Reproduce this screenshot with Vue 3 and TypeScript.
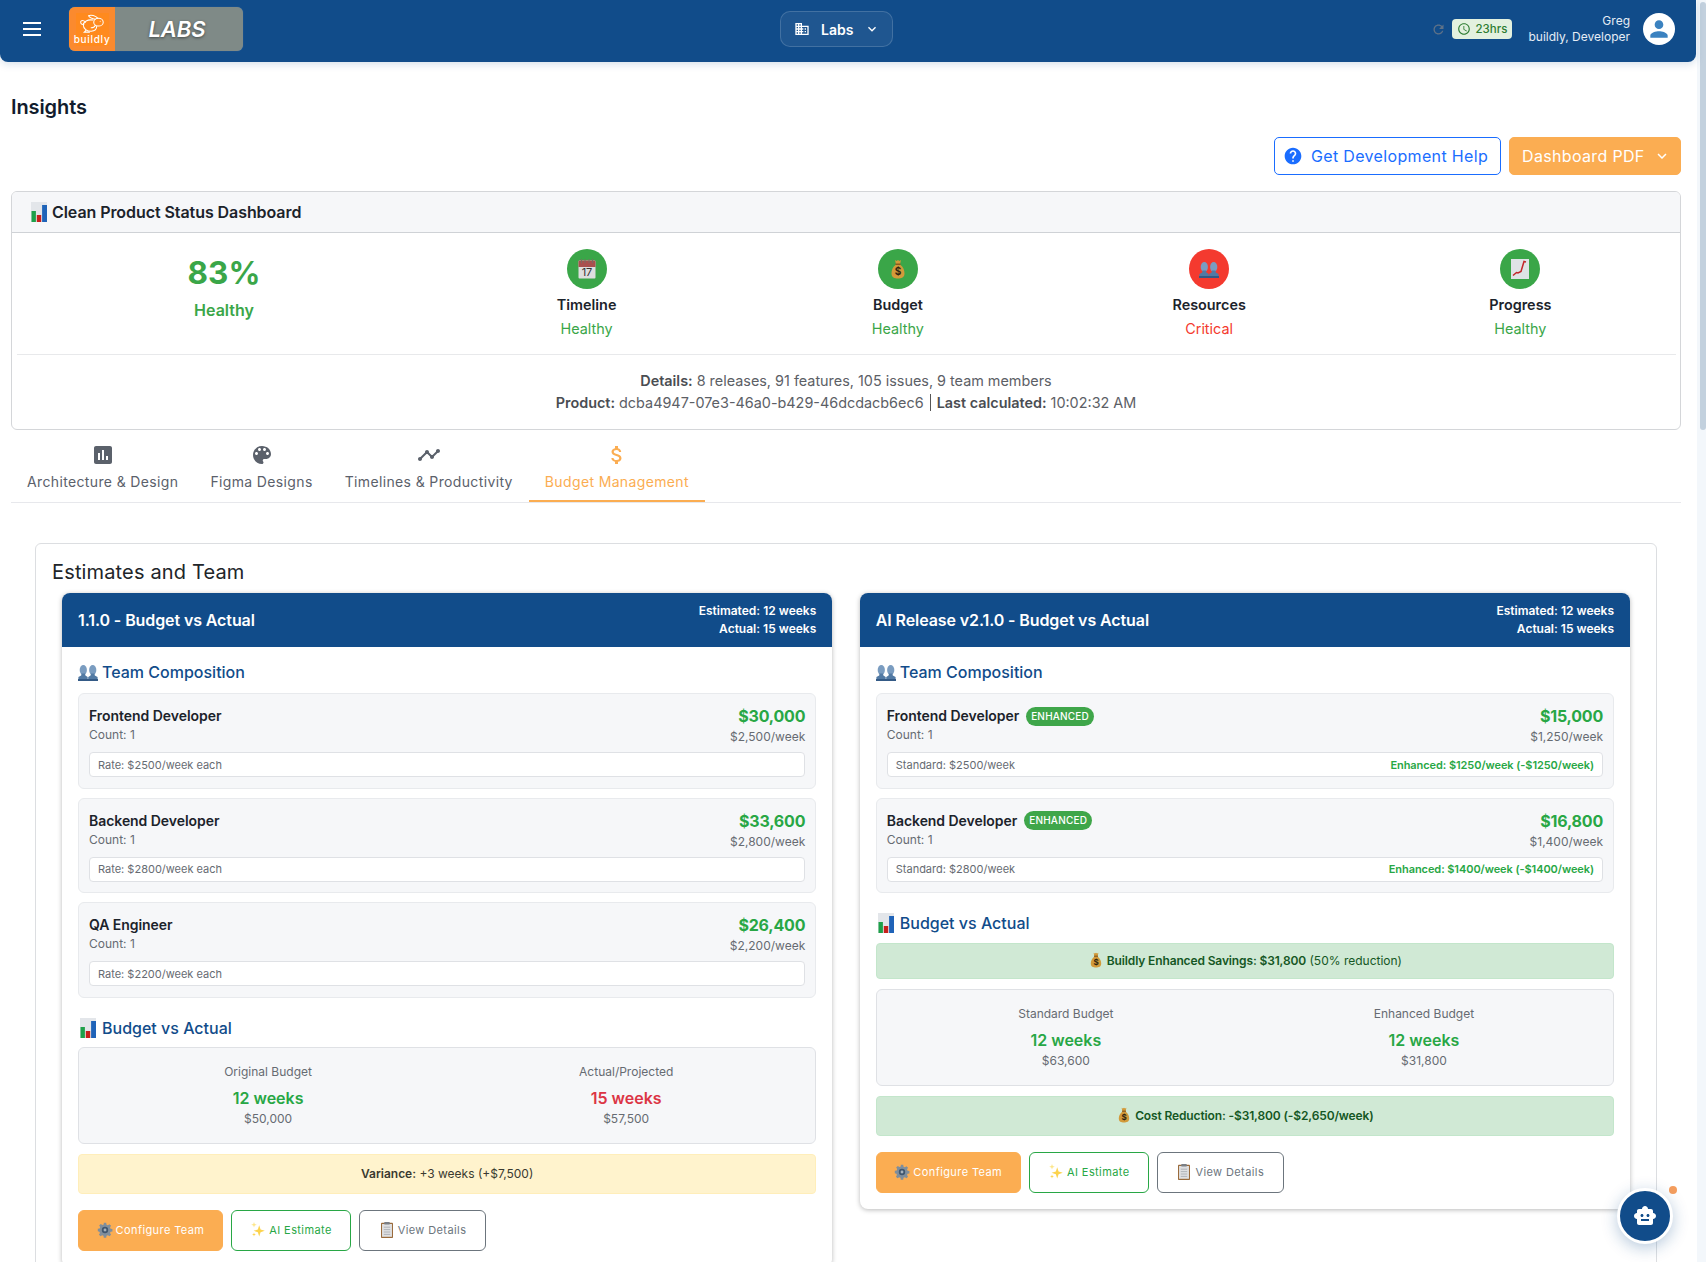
<script setup lang="ts">
import { h } from 'vue'

interface Role { name: string; count: string; amount: string; week: string; rate?: string; std?: string; enh?: string }
interface Status { icon: string; label: string; state: string; bad?: boolean }
const P = {
  assess: 'M19 3H5c-1.1 0-2 .9-2 2v14c0 1.1.9 2 2 2h14c1.1 0 2-.9 2-2V5c0-1.1-.9-2-2-2zM9 17H7v-7h2v7zm4 0h-2V7h2v10zm4 0h-2v-4h2v4z',
  palette: 'M12 3c-4.97 0-9 4.03-9 9s4.03 9 9 9c.83 0 1.5-.67 1.5-1.5 0-.39-.15-.74-.39-1.01-.23-.26-.38-.61-.38-.99 0-.83.67-1.5 1.5-1.5H16c2.76 0 5-2.24 5-5 0-4.42-4.03-8-9-8zm-5.5 9c-.83 0-1.5-.67-1.5-1.5S5.67 9 6.5 9 8 9.67 8 10.5 7.33 12 6.5 12zm3-4C8.67 8 8 7.33 8 6.5S8.67 5 9.5 5s1.5.67 1.5 1.5S10.33 8 9.5 8zm5 0c-.83 0-1.5-.67-1.5-1.5S13.67 5 14.5 5s1.5.67 1.5 1.5S15.33 8 14.5 8zm3 4c-.83 0-1.5-.67-1.5-1.5S16.67 9 17.5 9s1.5.67 1.5 1.5-.67 1.5-1.5 1.5z',
  timeline: 'M23 8c0 1.1-.9 2-2 2-.18 0-.35-.02-.51-.07l-3.56 3.55c.05.16.07.34.07.52 0 1.1-.9 2-2 2s-2-.9-2-2c0-.18.02-.36.07-.52l-2.55-2.55c-.16.05-.34.07-.52.07s-.36-.02-.52-.07l-4.55 4.56c.05.16.07.33.07.51 0 1.1-.9 2-2 2s-2-.9-2-2 .9-2 2-2c.18 0 .35.02.51.07l4.56-4.55C8.02 9.36 8 9.18 8 9c0-1.1.9-2 2-2s2 .9 2 2c0 .18-.02.36-.07.52l2.55 2.55c.16-.05.34-.07.52-.07s.36.02.52.07l3.55-3.56C19.02 8.35 19 8.18 19 8c0-1.1.9-2 2-2s2 .9 2 2z',
  money: 'M11.8 10.9c-2.27-.59-3-1.2-3-2.15 0-1.09 1.01-1.85 2.7-1.85 1.78 0 2.44.85 2.5 2.1h2.21c-.07-1.72-1.12-3.3-3.21-3.81V3h-3v2.16c-1.94.42-3.5 1.68-3.5 3.61 0 2.31 1.91 3.46 4.7 4.13 2.5.6 3 1.48 3 2.41 0 .69-.49 1.79-2.7 1.79-2.06 0-2.87-.92-2.98-2.1h-2.2c.12 2.19 1.76 3.42 3.68 3.83V21h3v-2.15c1.95-.37 3.5-1.5 3.5-3.55 0-2.84-2.43-3.81-4.7-4.4z',
  help: 'M12 2C6.48 2 2 6.48 2 12s4.48 10 10 10 10-4.48 10-10S17.52 2 12 2zm1 17h-2v-2h2v2zm2.07-7.75l-.9.92C13.45 12.9 13 13.5 13 15h-2v-.5c0-1.1.45-2.1 1.17-2.83l1.24-1.26c.37-.36.59-.86.59-1.41 0-1.1-.9-2-2-2s-2 .9-2 2H8c0-2.21 1.79-4 4-4s4 1.79 4 4c0 .88-.36 1.68-.93 2.25z',
  domain: 'M12 7V3H2v18h20V7H12zM6 19H4v-2h2v2zm0-4H4v-2h2v2zm0-4H4V9h2v2zm0-4H4V5h2v2zm4 12H8v-2h2v2zm0-4H8v-2h2v2zm0-4H8V9h2v2zm0-4H8V5h2v2zm10 12h-8v-2h2v-2h-2v-2h2v-2h-2V9h8v10zm-2-8h-2v2h2v-2zm0 4h-2v2h2v-2z',
  refresh: 'M17.65 6.35C16.2 4.9 14.21 4 12 4c-4.42 0-7.99 3.58-7.99 8s3.57 8 7.99 8c3.73 0 6.84-2.55 7.73-6h-2.08c-.82 2.33-3.04 4-5.65 4-3.31 0-6-2.69-6-6s2.69-6 6-6c1.66 0 3.14.69 4.22 1.78L13 11h7V4l-2.35 2.35z',
  clock: 'M11.99 2C6.47 2 2 6.48 2 12s4.47 10 9.99 10C17.52 22 22 17.52 22 12S17.52 2 11.99 2zM12 20c-4.42 0-8-3.58-8-8s3.58-8 8-8 8 3.58 8 8-3.58 8-8 8zm.5-13H11v6l5.25 3.15.75-1.23-4.5-2.67z',
  person: 'M12 12c2.21 0 4-1.79 4-4s-1.79-4-4-4-4 1.79-4 4 1.79 4 4 4zm0 2c-2.67 0-8 1.34-8 4v2h16v-2c0-2.66-5.33-4-8-4z',
  chevron: 'M16.59 8.59L12 13.17 7.41 8.59 6 10l6 6 6-6z',
  robot: 'M20 9V7c0-1.1-.9-2-2-2h-3c0-1.66-1.34-3-3-3S9 3.34 9 5H6c-1.1 0-2 .9-2 2v2c-1.66 0-3 1.34-3 3s1.34 3 3 3v4c0 1.1.9 2 2 2h12c1.1 0 2-.9 2-2v-4c1.66 0 3-1.34 3-3s-1.34-3-3-3zM7.5 11.5C7.5 10.67 8.17 10 9 10s1.5.67 1.5 1.5S9.83 13 9 13s-1.5-.67-1.5-1.5zM16 17H8v-2h8v2zm-1-4c-.83 0-1.5-.67-1.5-1.5S14.17 10 15 10s1.5.67 1.5 1.5S15.83 13 15 13z',
}

const emojiFont = 'Inter, sans-serif'
const BagIcon = () =>
  h('svg', { viewBox: '0 0 20 20' }, [
    h('use', { href: '#e-bag' }),
    h('text', { x: 10, y: 16, 'font-size': 10, 'font-weight': 700, 'text-anchor': 'middle', fill: '#2d2410', 'font-family': emojiFont }, '$'),
  ])
const CalIcon = () =>
  h('svg', { viewBox: '0 0 20 20' }, [
    h('use', { href: '#e-cal' }),
    h('text', { x: 10, y: 17, 'font-size': 11, 'text-anchor': 'middle', fill: '#333', 'font-family': emojiFont }, '17'),
  ])

const tabs = [
  { label: 'Architecture & Design', d: P.assess },
  { label: 'Figma Designs', d: P.palette },
  { label: 'Timelines & Productivity', d: P.timeline },
  { label: 'Budget Management', d: P.money, active: true },
]
const statuses: Status[] = [
  { icon: 'e-cal', label: 'Timeline', state: 'Healthy' },
  { icon: 'e-bag', label: 'Budget', state: 'Healthy' },
  { icon: 'e-users', label: 'Resources', state: 'Critical', bad: true },
  { icon: 'e-up', label: 'Progress', state: 'Healthy' },
]
const leftRoles: Role[] = [
  { name: 'Frontend Developer', count: 'Count: 1', amount: '$30,000', week: '$2,500/week', rate: 'Rate: $2500/week each' },
  { name: 'Backend Developer', count: 'Count: 1', amount: '$33,600', week: '$2,800/week', rate: 'Rate: $2800/week each' },
  { name: 'QA Engineer', count: 'Count: 1', amount: '$26,400', week: '$2,200/week', rate: 'Rate: $2200/week each' },
]
const rightRoles: Role[] = [
  { name: 'Frontend Developer', count: 'Count: 1', amount: '$15,000', week: '$1,250/week', std: 'Standard: $2500/week', enh: 'Enhanced: $1250/week (-$1250/week)' },
  { name: 'Backend Developer', count: 'Count: 1', amount: '$16,800', week: '$1,400/week', std: 'Standard: $2800/week', enh: 'Enhanced: $1400/week (-$1400/week)' },
]
const cards = [
  {
    title: '1.1.0 - Budget vs Actual', roles: leftRoles, enhanced: false,
    cols: [
      { label: 'Original Budget', value: '12 weeks', sub: '$50,000', bad: false },
      { label: 'Actual/Projected', value: '15 weeks', sub: '$57,500', bad: true },
    ],
  },
  {
    title: 'AI Release v2.1.0 - Budget vs Actual', roles: rightRoles, enhanced: true,
    cols: [
      { label: 'Standard Budget', value: '12 weeks', sub: '$63,600', bad: false },
      { label: 'Enhanced Budget', value: '12 weeks', sub: '$31,800', bad: false },
    ],
  },
]
</script>

<template>
  <div class="page">
    <svg class="sprite" aria-hidden="true">
      <symbol id="e-chart" viewBox="0 0 20 20">
        <rect x="2" y="0" width="16" height="20" fill="#e3e6ea" />
        <rect x="2.500" y="9" width="4.400" height="11" fill="#1ea04a" />
        <rect x="7.800" y="13" width="4.400" height="7" fill="#c8201c" />
        <rect x="13.100" y="3" width="4.900" height="17" fill="#1f63b8" />
      </symbol>
      <symbol id="e-users" viewBox="0 0 20 20">
        <ellipse cx="5.300" cy="8" rx="3.600" ry="5" fill="#7a9cc0" />
        <ellipse cx="14.700" cy="8" rx="3.600" ry="5" fill="#7a9cc0" />
        <path d="M3.500 11.500h3.600l.3 2 2.300 1.500V18H.4v-3l2.800-1.500z" fill="#527aa4" />
        <path d="M12.900 11.500h3.600l.3 2 2.800 1.500V18h-9.400v-3l2.400-1.500z" fill="#527aa4" />
        <rect x="0" y="17" width="20" height="2" fill="#345a86" />
      </symbol>
      <symbol id="e-cal" viewBox="0 0 20 20">
        <rect x="1.500" y="1.500" width="17" height="18" rx="1" fill="#dedede" />
        <path d="M1.500 2.500a1 1 0 0 1 1-1h15a1 1 0 0 1 1 1V8h-17z" fill="#a9504e" />
        <path d="M4.500 0v4M8 0v4M12 0v4M15.500 0v4" stroke="#7b6a62" stroke-width="1" />
      </symbol>
      <symbol id="e-bag" viewBox="0 0 20 20">
        <path d="M7 1l1.500 1L10 1l1.500 1L13 1l-1 4.500c3.500 2.500 4.500 6 4.500 9 0 4-3 5-6.500 5s-6.500-1-6.500-5c0-3 1-6.500 4.500-9z" fill="#d29a3a" />
        <rect x="7.500" y="4.500" width="5" height="1.500" fill="#8a5a1e" />
      </symbol>
      <symbol id="e-up" viewBox="0 0 20 20">
        <rect x="1" y="0" width="18" height="20" fill="#dfe3e6" />
        <path d="M3 16.500l3.500-3 1.500.5 3-1.500 3-10 2 .5" fill="none" stroke="#c3262a" stroke-width="1.500" />
      </symbol>
      <symbol id="e-gear" viewBox="0 0 20 20">
        <path d="M8.500 1h3l.4 2.300 1.700.7 1.900-1.300 2.100 2.100-1.300 1.900.7 1.700 2.300.4v3l-2.300.4-.7 1.700 1.300 1.900-2.100 2.100-1.900-1.300-1.700.7-.4 2.300h-3l-.4-2.300-1.700-.7-1.900 1.300-2.100-2.100 1.300-1.900-.7-1.700L1 11.500v-3l2.300-.4.7-1.700-1.300-1.900 2.100-2.100 1.900 1.300 1.700-.7z" fill="#7f8e9c" />
        <circle cx="10" cy="10" r="4" fill="#3f566f" />
        <circle cx="10" cy="10" r="1.800" fill="#a6b2bd" />
      </symbol>
      <symbol id="e-spark" viewBox="0 0 20 20">
        <path d="M11.500 4l1.700 5.300L18.500 11l-5.300 1.700L11.500 18l-1.700-5.300L4.500 11l5.300-1.700z" fill="#fcd34d" />
        <path d="M5 0l.9 2.600 2.600.9-2.600.9L5 7l-.9-2.600-2.600-.9 2.600-.9z" fill="#fde68a" />
        <path d="M5 13l.6 1.900 1.900.6-1.900.6L5 18l-.6-1.900-1.900-.6 1.900-.6z" fill="#fcd34d" />
      </symbol>
      <symbol id="e-clip" viewBox="0 0 20 20">
        <rect x="2.500" y="1" width="15" height="19" rx="1" fill="#9a6b3c" />
        <rect x="3.800" y="2.500" width="12.400" height="16" fill="#dfe0e2" />
        <path d="M6 6.500h8M6 9.500h8M6 12.500h8M6 15.500h8" stroke="#a3a8ad" stroke-width="1" />
        <rect x="6.500" y="0" width="7" height="3" rx=".6" fill="#7a7f86" />
      </symbol>
    </svg>

    <header class="topbar">
      <div class="top-left">
        <button class="menu" aria-label="menu"><span></span><span></span><span></span></button>
        <div class="logo">
          <div class="logo-mark">
            <div class="logo-inner">
              <svg viewBox="0 0 32 22" width="28" height="19" fill="none" stroke="#fff" stroke-width="1.200" stroke-linecap="round">
                <path d="M17 7C11 6 6 9 6 13c0 4 4 7 9 7 4 0 6.500-2 6.500-6" />
                <ellipse cx="23.500" cy="9.500" rx="5.500" ry="4.500" />
                <path d="M20 6C17 5.500 13 4 12 2c3-1.500 8 0 11 3" />
                <path d="M6.500 12C4 12.500 2.500 11 3 8.500c1.500-1.500 4-.5 5.500 1M9 19l-2 2h6M15 16c2 0 4-1 5-3" />
                <circle cx="25.500" cy="8.500" r=".6" fill="#fff" stroke="none" />
              </svg>
              <span class="logo-word">buildly</span>
            </div>
          </div>
          <div class="logo-labs">LABS</div>
        </div>
      </div>
      <div class="org">
        <svg class="org-ic" viewBox="0 0 24 24"><path :d="P.domain" /></svg>
        <span>Labs</span>
        <svg class="org-chev" viewBox="0 0 24 24"><path :d="P.chevron" /></svg>
      </div>
      <div class="top-right">
        <svg class="refresh" viewBox="0 0 24 24"><path :d="P.refresh" /></svg>
        <div class="hours">
          <svg viewBox="0 0 24 24"><path :d="P.clock" /></svg>
          <span>23hrs</span>
        </div>
        <div class="who"><div>Greg</div><div>buildly, Developer</div></div>
        <div class="avatar"><svg viewBox="0 0 24 24"><path :d="P.person" /></svg></div>
      </div>
    </header>

    <main class="main">
      <h1 class="title">Insights</h1>
      <div class="actions">
        <button class="btn-help">
          <svg viewBox="0 0 24 24"><path :d="P.help" /></svg>
          Get Development Help
        </button>
        <button class="btn-pdf">
          Dashboard PDF
          <svg viewBox="0 0 24 24"><path :d="P.chevron" /></svg>
        </button>
      </div>

      <section class="status-card">
        <div class="status-head">
          <svg class="em em-20"><use href="#e-chart" /></svg>
          <span>Clean Product Status Dashboard</span>
        </div>
        <div class="status-row">
          <div class="score">
            <div class="pct">83%</div>
            <div class="pct-state">Healthy</div>
          </div>
          <div class="status-items">
            <div v-for="s in statuses" :key="s.label" class="s-item">
              <div class="s-dot" :class="{ bad: s.bad }">
                <CalIcon v-if="s.icon === 'e-cal'" class="em em-20" />
                <BagIcon v-else-if="s.icon === 'e-bag'" class="em em-20" />
                <svg v-else class="em em-20"><use :href="'#' + s.icon" /></svg>
              </div>
              <div class="s-label">{{ s.label }}</div>
              <div class="s-state" :class="{ bad: s.bad }">{{ s.state }}</div>
            </div>
          </div>
        </div>
        <div class="status-foot">
          <div><b>Details:</b> 8 releases, 91 features, 105 issues, 9 team members</div>
          <div><b>Product:</b> dcba4947-07e3-46a0-b429-46dcdacb6ec6 <span class="pipe"></span> <b>Last calculated:</b> 10:02:32 AM</div>
        </div>
      </section>

      <nav class="tabs">
        <div v-for="t in tabs" :key="t.label" class="tab" :class="{ active: t.active }">
          <svg viewBox="0 0 24 24"><path :d="t.d" /></svg>
          <span>{{ t.label }}</span>
        </div>
      </nav>

      <section class="estimates">
        <h2 class="est-title">Estimates and Team</h2>
        <div class="est-grid">
          <article v-for="c in cards" :key="c.title" class="rel-card">
            <div class="rel-head">
              <div class="rel-title">{{ c.title }}</div>
              <div class="rel-meta"><div>Estimated: 12 weeks</div><div>Actual: 15 weeks</div></div>
            </div>
            <div class="rel-body">
              <h3 class="sub-title"><svg class="em em-20"><use href="#e-users" /></svg>Team Composition</h3>
              <div class="roles">
                <div v-for="r in c.roles" :key="r.name" class="role">
                  <div class="role-top">
                    <div>
                      <div class="role-name">{{ r.name }}<span v-if="r.enh" class="pill">ENHANCED</span></div>
                      <div class="role-count">{{ r.count }}</div>
                    </div>
                    <div class="role-money">
                      <div class="amount">{{ r.amount }}</div>
                      <div class="per">{{ r.week }}</div>
                    </div>
                  </div>
                  <div class="rate">
                    <span>{{ r.rate || r.std }}</span>
                    <span v-if="r.enh" class="enh">{{ r.enh }}</span>
                  </div>
                </div>
              </div>
              <h3 class="sub-title budget"><svg class="em em-20"><use href="#e-chart" /></svg>Budget vs Actual</h3>
              <div v-if="c.enhanced" class="banner savings">
                <BagIcon class="em em-16" />
                <b>Buildly Enhanced Savings: $31,800</b>&nbsp;(50% reduction)
              </div>
              <div class="compare">
                <div v-for="col in c.cols" :key="col.label" class="cmp-col">
                  <div class="cmp-label">{{ col.label }}</div>
                  <div class="cmp-value" :class="{ bad: col.bad }">{{ col.value }}</div>
                  <div class="cmp-sub">{{ col.sub }}</div>
                </div>
              </div>
              <div v-if="c.enhanced" class="banner reduction">
                <BagIcon class="em em-16" />
                <b>Cost Reduction: -$31,800 (-$2,650/week)</b>
              </div>
              <div v-else class="banner variance"><b>Variance:</b>&nbsp;+3 weeks (+$7,500)</div>
              <div class="btns">
                <button class="b b-orange"><svg class="em em-16"><use href="#e-gear" /></svg>Configure Team</button>
                <button class="b b-green"><svg class="em em-16"><use href="#e-spark" /></svg>AI Estimate</button>
                <button class="b b-gray"><svg class="em em-16"><use href="#e-clip" /></svg>View Details</button>
              </div>
            </div>
          </article>
        </div>
      </section>
    </main>

    <div class="scroll-track"><div class="scroll-thumb"></div></div>
    <div class="dot"></div>
    <button class="fab" aria-label="assistant"><svg viewBox="0 0 24 24"><path :d="P.robot" /></svg></button>
  </div>
</template>

<style>
html, body { margin: 0; height: 1262px; overflow: hidden; background: #fff; }
</style>

<style scoped>
.page { position: relative; width: 1706px; height: 1262px; overflow: hidden; font-family: Inter, "Liberation Sans", sans-serif; color: #212529; background: #fff; }
.sprite { position: absolute; width: 0; height: 0; }
button { font-family: inherit; cursor: pointer; }
svg { display: block; flex: none; }
.em { display: inline-block; }
.em-16 { width: 16px; height: 16px; }
.em-20 { width: 20px; height: 20px; }

.topbar { width: 1696px; height: 62px; box-sizing: border-box; margin-bottom: -1px; background: #114c8a; border-radius: 0 0 8px 8px; box-shadow: 0 2px 8px rgba(17, 76, 138, .18); display: grid; grid-template-columns: 757px 113px 1fr; align-items: center; padding: 0 21px 4px 23px; position: relative; z-index: 2; }
.top-left { display: flex; align-items: center; gap: 28px; }
.menu { width: 18px; height: 14px; padding: 0; border: 0; background: none; display: flex; flex-direction: column; justify-content: space-between; }
.menu span { display: block; height: 2px; background: #fff; }
.logo { width: 174px; height: 44px; display: flex; background: #7f8a87; border-radius: 6px; overflow: hidden; box-shadow: 0 0 1px rgba(255,255,255,.3); }
.logo-mark { width: 46px; background: #fb8a2e; display: flex; align-items: center; justify-content: center; color: #fff; }
.logo-inner { width: 33px; height: 33px; background: #ff8a1e; display: flex; flex-direction: column; align-items: center; justify-content: center; }
.logo-word { font-size: 10px; line-height: 11px; letter-spacing: .7px; font-weight: 500; margin-top: 1px; }
.logo-labs { flex: 1; display: flex; align-items: center; justify-content: center; color: #fff; font-size: 22px; font-weight: 600; font-style: italic; text-shadow: 0 1px 3px rgba(0, 0, 0, .5); padding-right: 4px; }
.org { width: 113px; height: 36px; box-sizing: border-box; display: flex; align-items: center; padding-left: 13px; color: #fff; font-size: 14px; font-weight: 600; background: rgba(255,255,255,.06); border: 1px solid rgba(255,255,255,.16); border-radius: 10px; }
.org-ic { width: 16px; height: 16px; fill: #fff; margin-right: 11px; }
.org-chev { width: 16px; height: 16px; fill: #fff; margin-left: 11px; }
.top-right { display: flex; align-items: center; justify-content: flex-end; }
.refresh { width: 15px; height: 15px; fill: #5f7288; margin-right: 6px; }
.hours { width: 60px; height: 20px; box-sizing: border-box; display: flex; align-items: center; gap: 4px; padding-left: 5px; border-radius: 4px; background: #e3f1df; color: #2e7d32; font-size: 11.500px; font-weight: 500; }
.hours svg { width: 14px; height: 14px; fill: #2e7d32; }
.who { margin-left: 16px; text-align: right; color: #e6edf5; font-size: 12px; line-height: 16px; }
.avatar { width: 32px; height: 32px; margin-left: 13px; border-radius: 50%; background: #fff; display: flex; align-items: center; justify-content: center; }
.avatar svg { width: 26px; height: 26px; fill: #3b82c0; }

.main { width: 1697px; box-sizing: border-box; padding: 0 16px 0 11px; }
.title { margin: 0; padding-top: 32px; font-size: 20px; line-height: 28px; font-weight: 600; letter-spacing: -.1px; color: #111c2d; }
.actions { display: flex; justify-content: flex-end; gap: 8px; margin-top: 16px; }
.btn-help, .btn-pdf { height: 38px; box-sizing: border-box; display: flex; align-items: center; font-size: 16px; letter-spacing: .34px; border-radius: 5px; padding: 0; }
.btn-help { width: 227px; justify-content: flex-start; gap: 8px; padding-left: 8px; background: #fff; border: 1px solid #1a6dff; color: #1a6dff; }
.btn-help svg { width: 20px; height: 20px; fill: #1a6dff; }
.btn-pdf { width: 172px; justify-content: flex-start; gap: 8px; padding-left: 12px; background: #fbad52; border: 1px solid #fbad52; color: #fff; }
.btn-pdf svg { width: 18px; height: 18px; fill: #fff; }

.status-card { margin-top: 16px; height: 239px; box-sizing: border-box; border: 1px solid #d4d6d9; border-radius: 6px; overflow: hidden; }
.status-head { height: 41px; box-sizing: border-box; background: #f6f7f9; border-bottom: 1px solid #cfd2d6; display: flex; align-items: center; gap: 3px; padding-left: 17px; font-size: 16px; letter-spacing: -.07px; font-weight: 600; color: #1c232b; }
.status-row { margin: 0 4px 0 5px; display: grid; grid-template-columns: 414px 1fr; padding: 16px 0 15px; border-bottom: 1px solid #e8e9eb; }
.score { text-align: center; padding-top: 5px; }
.pct { font-size: 31.500px; line-height: 38px; font-weight: 700; color: #3aa648; }
.pct-state { margin-top: 8px; font-size: 16px; line-height: 20px; font-weight: 600; color: #3aa648; }
.status-items { display: grid; grid-template-columns: repeat(4, 1fr); }
.s-item { text-align: center; }
.s-dot { width: 40px; height: 40px; margin: 0 auto; border-radius: 50%; background: #3aa648; display: flex; align-items: center; justify-content: center; }
.s-dot.bad { background: #f43a2f; }
.s-label { margin-top: 6px; font-size: 14.400px; line-height: 20px; font-weight: 600; color: #1c232b; }
.s-state { margin-top: 4px; font-size: 14.400px; line-height: 20px; color: #3aa648; }
.s-state.bad { color: #f43a2f; }
.status-foot { padding-top: 15px; text-align: center; font-size: 14.400px; line-height: 22px; color: #5c6066; }
.status-foot b { font-weight: 600; color: #4a4d52; }
.pipe { display: inline-block; width: 1px; height: 17px; background: #555; margin: 0 2px; vertical-align: -3px; }

.tabs { height: 73px; box-sizing: border-box; display: flex; border-bottom: 1px solid #e7e8ec; }
.tab { height: 72px; box-sizing: border-box; padding: 13px 16px 0; display: flex; flex-direction: column; align-items: center; font-size: 14px; line-height: 20px; letter-spacing: .36px; color: #5b616b; border-bottom: 2px solid transparent; }
.tab svg { width: 24px; height: 24px; fill: currentColor; margin-bottom: 5px; }
.tab.active { color: #fbad52; border-bottom-color: #fbad52; }

.estimates { margin: 40px 24px 0 24px; border: 1px solid #dcdee1; border-radius: 6px; }
.est-title { margin: 0; padding: 14px 16px 0; font-size: 20px; line-height: 28px; font-weight: 400; letter-spacing: .15px; color: #212529; }
.est-grid { margin-top: 7px; padding: 0 26px; display: grid; grid-template-columns: 1fr 1fr; gap: 27.500px; align-items: start; }
.rel-card { border-radius: 8px; background: #fff; box-shadow: 0 1px 5px rgba(0,0,0,.28); overflow: hidden; }
.rel-head { height: 54px; box-sizing: border-box; background: #114c8a; color: #fff; display: flex; align-items: center; justify-content: space-between; padding: 0 16px; }
.rel-title { font-size: 16px; font-weight: 600; letter-spacing: -.1px; }
.rel-meta { text-align: right; font-size: 12px; line-height: 18px; font-weight: 600; }
.rel-body { padding: 13px 16px 16px; }
.sub-title { margin: 0; display: flex; align-items: center; gap: 4px; font-size: 16px; line-height: 24px; font-weight: 500; color: #114c8a; }
.roles { margin-top: 9px; display: flex; flex-direction: column; gap: 9px; }
.sub-title.budget { margin: 18px 0 7.500px; }
.role { box-sizing: border-box; height: 95.500px; padding: 12px 10px 0; background: #f6f7f9; border: 1px solid #e8eaed; border-radius: 6px; }
.role-top { display: flex; justify-content: space-between; height: 40px; }
.role-name { display: flex; align-items: center; gap: 7px; font-size: 14px; line-height: 20px; font-weight: 600; letter-spacing: -.05px; color: #1c232b; }
.pill { height: 19px; line-height: 19px; padding: 0 5px; border-radius: 10px; background: #3fa64a; color: #fff; font-size: 10px; font-weight: 500; letter-spacing: .2px; }
.role-count { font-size: 12px; line-height: 17px; color: #666b72; }
.role-money { text-align: right; margin-top: -1px; }
.amount { font-size: 16px; line-height: 22px; font-weight: 700; letter-spacing: -.2px; color: #28a745; }
.per { margin-top: 1px; font-size: 12px; line-height: 18px; color: #666b72; }
.rate { margin-top: 6px; height: 25.400px; box-sizing: border-box; display: flex; align-items: center; justify-content: space-between; padding: 0 8px; background: #fff; border: 1px solid #dfe1e5; border-radius: 4px; font-size: 11px; color: #666b72; }
.enh { color: #28a745; font-weight: 600; letter-spacing: -.07px; }
.banner { box-sizing: border-box; height: 40px; display: flex; align-items: center; justify-content: center; border-radius: 4px; font-size: 12px; border: 1px solid transparent; }
.banner .em { margin-right: 3px; }
.banner b { font-weight: 600; }
.variance { margin-top: 10.500px; padding-bottom: 2px; background: #fff3cd; border-color: #ffeeba; color: #3a3a30; }
.savings { height: 36px; margin-bottom: 10.500px; padding-bottom: 1px; background: #d0e9d5; border-color: #c3e6cb; color: #155724; }
.savings b, .reduction b { letter-spacing: -.13px; }
.reduction { margin-top: 10.500px; padding-bottom: 2px; background: #d0e9d5; border-color: #c3e6cb; color: #155724; }
.compare { height: 96.500px; box-sizing: border-box; display: grid; grid-template-columns: 1fr 1fr; padding: 15px 10px 0; background: #f6f7f9; border: 1px solid #dfe1e5; border-radius: 6px; text-align: center; }
.cmp-label { font-size: 12px; line-height: 18px; color: #666b72; }
.cmp-value { margin-top: 6px; font-size: 16px; line-height: 22px; font-weight: 600; color: #28a745; }
.cmp-value.bad { color: #dc3545; }
.cmp-sub { margin-top: 1px; font-size: 12px; line-height: 18px; color: #666b72; }
.btns { margin-top: 16px; display: flex; gap: 8px; }
.b { height: 41px; box-sizing: border-box; display: flex; align-items: center; justify-content: center; gap: 3px; padding: 0 0 2px; font-size: 11px; letter-spacing: .4px; border-radius: 6px; background: #fff; }
.b-orange { width: 145px; background: #fbad52; border: 1px solid #fbad52; color: #fff; }
.b-green { width: 120px; border: 1px solid #28a745; color: #28a745; }
.b-gray { width: 127px; border: 1px solid #6c757d; color: #6c757d; }

.scroll-track { position: absolute; left: 1697px; top: 0; width: 9px; height: 1262px; background: #f3f7fb; }
.scroll-thumb { position: absolute; left: 3px; top: 2px; width: 6px; height: 428px; border-radius: 3px; background: #c3d1de; }
.dot { position: absolute; left: 1669px; top: 1186px; width: 8px; height: 8px; border-radius: 50%; background: #f59e5e; }
.fab { position: absolute; left: 1617px; top: 1188px; width: 56px; height: 56px; box-sizing: border-box; padding: 0; border: 3px solid #fff; border-radius: 50%; background: #114c8a; box-shadow: 0 4px 16px rgba(17, 76, 138, .3); display: flex; align-items: center; justify-content: center; }
.fab svg { width: 24px; height: 24px; fill: #fff; }
</style>
